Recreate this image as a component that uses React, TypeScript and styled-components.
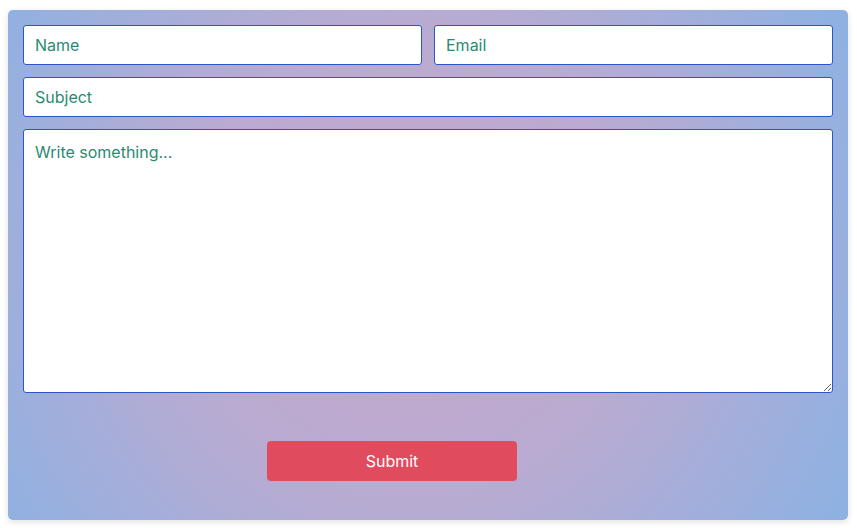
import styled, { createGlobalStyle } from 'styled-components'

const GlobalStyle = createGlobalStyle`
  html, body {
    margin: 0;
    background: #ffffff;
  }
  body {
    padding: 10px 9px 8px 8px;
    font-family: Inter, "Noto Sans", sans-serif;
  }
  * { box-sizing: border-box; }
`

const Card = styled.form`
  width: 840px;
  height: 510px;
  border-radius: 5px;
  padding: 15px 15px 40px 15px;
  background: radial-gradient(ellipse 58% 95% at 48% 50%, #c8a8ca 0%, #b8abd2 50%, #8fb1e2 100%);
  box-shadow: 0 2px 6px rgba(0, 0, 0, 0.12);
  display: flex;
  flex-direction: column;
  gap: 12px;
`

const Row = styled.div`
  display: flex;
  gap: 12px;
`

const Field = styled.input`
  flex: 1;
  height: 40px;
  border: 1px solid #2a56c6;
  border-radius: 3px;
  background: #ffffff;
  padding: 0 11px;
  font: inherit;
  font-size: 16px;
  outline: none;
  &::placeholder { color: #2b8a72; }
`

const Message = styled.textarea`
  height: 264px;
  flex-shrink: 0;
  border: 1px solid #2a56c6;
  border-radius: 3px;
  background: #ffffff;
  padding: 12px 11px;
  font: inherit;
  font-size: 16px;
  resize: vertical;
  outline: none;
  &::placeholder { color: #2b8a72; }
`

const Actions = styled.div`
  margin-top: 36px;
  padding-left: 244px;
`

const Submit = styled.button`
  width: 250px;
  height: 40px;
  border: none;
  border-radius: 4px;
  background: #e04b5e;
  color: #ffffff;
  font: inherit;
  font-size: 16px;
  cursor: pointer;
`

export default function App() {
  return (
    <>
      <GlobalStyle />
      <Card onSubmit={(e) => e.preventDefault()}>
        <Row>
          <Field placeholder="Name" />
          <Field placeholder="Email" />
        </Row>
        <Row>
          <Field placeholder="Subject" />
        </Row>
        <Message placeholder="Write something..." />
        <Actions>
          <Submit type="submit">Submit</Submit>
        </Actions>
      </Card>
    </>
  )
}
